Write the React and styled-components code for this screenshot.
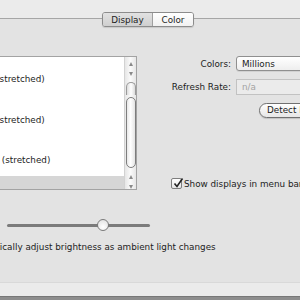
import React from 'react';
import styled, {createGlobalStyle} from 'styled-components';

const GlobalStyle = createGlobalStyle`
  html, body {
    margin: 0;
    padding: 0;
    overflow: hidden;
    background: #e3e3e3;
  }
  body {
    font-family: "DejaVu Sans", "Liberation Sans", sans-serif;
    font-size: 8.8px;
    color: #1c1c1c;
  }
`;

const Window = styled.div`
  width: 300px;
  height: 300px;
  display: flex;
  flex-direction: column;
  overflow: hidden;
`;

const Header = styled.div`
  height: 19px;
  flex: none;
  background: #ebebeb;
  border-bottom: 1px solid #a6a6a6;
  display: flex;
  justify-content: center;
  align-items: flex-start;
  padding-top: 12px;
  box-sizing: border-box;
  padding-right: 4px;
`;

const Segmented = styled.div`
  position: relative;
  z-index: 1;
  display: flex;
  height: 15px;
  border: 1px solid #8c8c8c;
  border-radius: 3px;
  overflow: hidden;
  box-sizing: border-box;
  box-shadow: 0 1px 1px rgba(0, 0, 0, 0.12);
`;

const Segment = styled.div`
  width: ${p => p.$width}px;
  display: flex;
  align-items: center;
  justify-content: center;
  background: ${p => p.$selected
    ? 'linear-gradient(#e2e2e2, #cfcfcf)'
    : 'linear-gradient(#ffffff, #f1f1f1)'};
  & + & {
    border-left: 1px solid #a0a0a0;
  }
`;

const Panel = styled.div`
  flex: 1;
  display: flex;
  flex-direction: column;
  padding-top: 37px;
  background: #e3e3e3;
`;

const TopRow = styled.div`
  display: flex;
  height: 134px;
`;

const ListBox = styled.div`
  flex: none;
  width: 196px;
  margin-left: -59px;
  display: flex;
  background: #fff;
  border: 1px solid #a3a3a3;
  box-sizing: border-box;
  overflow: hidden;
`;

const Items = styled.div`
  flex: 1;
  padding-top: 12px;
`;

const Item = styled.div`
  height: 20.25px;
  line-height: 20.25px;
  padding-left: 7px;
  white-space: nowrap;
`;

const SelectedItem = styled(Item)`
  margin-top: 6px;
  background: #d6d6d6;
`;

const Scrollbar = styled.div`
  width: 11px;
  flex: none;
  display: flex;
  flex-direction: column;
  align-items: center;
  background: linear-gradient(90deg, #e6e6e6, #fafafa 50%, #e6e6e6);
  border-left: 1px solid #d2d2d2;
`;

const Arrows = styled.div`
  display: flex;
  flex-direction: column;
  align-items: center;
  gap: 6px;
  padding: ${p => p.$top ? '5px 0 6px' : '4px 0 0'};
`;

const Arrow = styled.div`
  width: 0;
  height: 0;
  border-left: 2.5px solid transparent;
  border-right: 2.5px solid transparent;
  ${p => p.$up
    ? 'border-bottom: 4px solid #8a8a8a;'
    : 'border-top: 4px solid #8a8a8a;'}
`;

const Track = styled.div`
  flex: 1;
  width: 10px;
  display: flex;
  flex-direction: column;
`;

const TrackCap = styled.div`
  height: 13px;
  border: 1px solid #9a9a9a;
  border-bottom: none;
  border-radius: 5px 5px 0 0;
  background: linear-gradient(90deg, #dcdcdc, #ffffff 50%, #dcdcdc);
  box-sizing: border-box;
`;

const Thumb = styled.div`
  margin-top: 2px;
  height: 71px;
  border: 1px solid #7d7d7d;
  border-radius: 5px;
  background: linear-gradient(90deg, #e8e8e8, #ffffff 45%, #e4e4e4);
  box-sizing: border-box;
`;

const Settings = styled.div`
  flex: 1;
  display: grid;
  grid-template-columns: 94px 1fr;
  grid-template-rows: 15px 16px 15px 1fr;
  column-gap: 5px;
  row-gap: 8px;
  align-items: center;
  white-space: nowrap;
`;

const Label = styled.div`
  text-align: right;
`;

const Popup = styled.div`
  height: 15px;
  width: 100px;
  box-sizing: border-box;
  display: flex;
  align-items: center;
  padding-left: 5px;
  border: 1px solid #8f8f8f;
  border-radius: 3px 0 0 3px;
  background: linear-gradient(#ffffff, #eeeeee);
  box-shadow: 0 1px 0 rgba(0, 0, 0, 0.08);
`;

const Field = styled.div`
  height: 16px;
  width: 100px;
  box-sizing: border-box;
  display: flex;
  align-items: center;
  padding-left: 5px;
  border: 1px solid #c2c2c2;
  border-right: none;
  background: #ebebeb;
  color: #a3a3a3;
`;

const Button = styled.div`
  grid-column: 2;
  margin-left: 23px;
  margin-top: -1px;
  height: 15px;
  width: 90px;
  box-sizing: border-box;
  display: flex;
  align-items: center;
  padding-left: 7px;
  border: 1px solid #707070;
  border-radius: 8px;
  background: linear-gradient(#ffffff, #e6e6e6);
  box-shadow: 0 1px 1px rgba(0, 0, 0, 0.15);
`;

const MenuBarOption = styled.div`
  grid-column: 1 / 3;
  align-self: start;
  margin-top: 52px;
  margin-left: 34px;
  display: flex;
  align-items: center;
  gap: 2px;
`;

const CheckboxBox = styled.div`
  width: 11px;
  height: 11px;
  flex: none;
  box-sizing: border-box;
  border: 1px solid #7e7e7e;
  border-radius: 2px;
  background: linear-gradient(#ffffff, #e4e4e4);
  position: relative;
  svg {
    position: absolute;
    left: 0;
    top: -2px;
  }
`;

const SliderRow = styled.div`
  margin-top: 29px;
  margin-left: 7px;
  width: 143px;
  height: 12px;
  display: flex;
  align-items: center;
`;

const TrackPart = styled.div`
  height: 3px;
  background: #7b7b7b;
  flex: ${p => p.$grow ? 1 : 'none'};
  width: ${p => p.$width || 0}px;
  border-radius: ${p => p.$left ? '2px 0 0 2px' : '0 2px 2px 0'};
`;

const Knob = styled.div`
  width: 12px;
  height: 12px;
  flex: none;
  margin: 0 -1px;
  position: relative;
  box-sizing: border-box;
  border: 1px solid #7a7a7a;
  border-radius: 50%;
  background: radial-gradient(circle at 50% 70%, #ffffff, #dedede);
`;

const AutoRow = styled.div`
  margin-top: 10px;
  margin-left: -53px;
  display: flex;
  align-items: center;
  gap: 4px;
  white-space: nowrap;
`;

const FooterBand = styled.div`
  height: 14px;
  flex: none;
  background: #ebebeb;
  border-top: 1px solid #d9d9d9;
  box-sizing: border-box;
`;

const FooterBar = styled.div`
  height: 4px;
  flex: none;
  background: #8d8d8d;
  border-top: 1px solid #777;
  box-sizing: border-box;
`;

const Checkbox = ({checked}) => (
  <CheckboxBox>
    {checked && (
      <svg width="12" height="12" viewBox="0 0 12 12">
        <path d="M2.5 6.5 L5 9.5 L10.5 1.5" fill="none" stroke="#222" strokeWidth="1.6" />
      </svg>
    )}
  </CheckboxBox>
);

const resolutions = [
  '640 x 480 (stretched)',
  '720 x 480',
  '800 x 600 (stretched)',
  '800 x 500',
  '1024 x 768 (stretched)'
];

export default function App() {
  return (
    <Window>
      <GlobalStyle />
      <Header>
        <Segmented>
          <Segment $selected $width={49}>Display</Segment>
          <Segment $width={40}>Color</Segment>
        </Segmented>
      </Header>
      <Panel>
        <TopRow>
          <ListBox>
            <Items>
              {resolutions.map(r => <Item key={r}>{r}</Item>)}
              <SelectedItem>1024 x 640</SelectedItem>
            </Items>
            <Scrollbar>
              <Arrows $top>
                <Arrow $up />
                <Arrow />
              </Arrows>
              <Track>
                <TrackCap />
                <Thumb />
              </Track>
              <Arrows>
                <Arrow $up />
                <Arrow />
              </Arrows>
            </Scrollbar>
          </ListBox>
          <Settings>
            <Label>Colors:</Label>
            <Popup>Millions</Popup>
            <Label>Refresh Rate:</Label>
            <Field>n/a</Field>
            <Button>Detect Displays</Button>
            <MenuBarOption>
              <Checkbox checked />
              <span>Show displays in menu bar</span>
            </MenuBarOption>
          </Settings>
        </TopRow>
        <SliderRow>
          <TrackPart $left $width={91} />
          <Knob />
          <TrackPart $grow />
        </SliderRow>
        <AutoRow>
          <Checkbox />
          <span>Automatically adjust brightness as ambient light changes</span>
        </AutoRow>
      </Panel>
      <FooterBand />
      <FooterBar />
    </Window>
  );
}
